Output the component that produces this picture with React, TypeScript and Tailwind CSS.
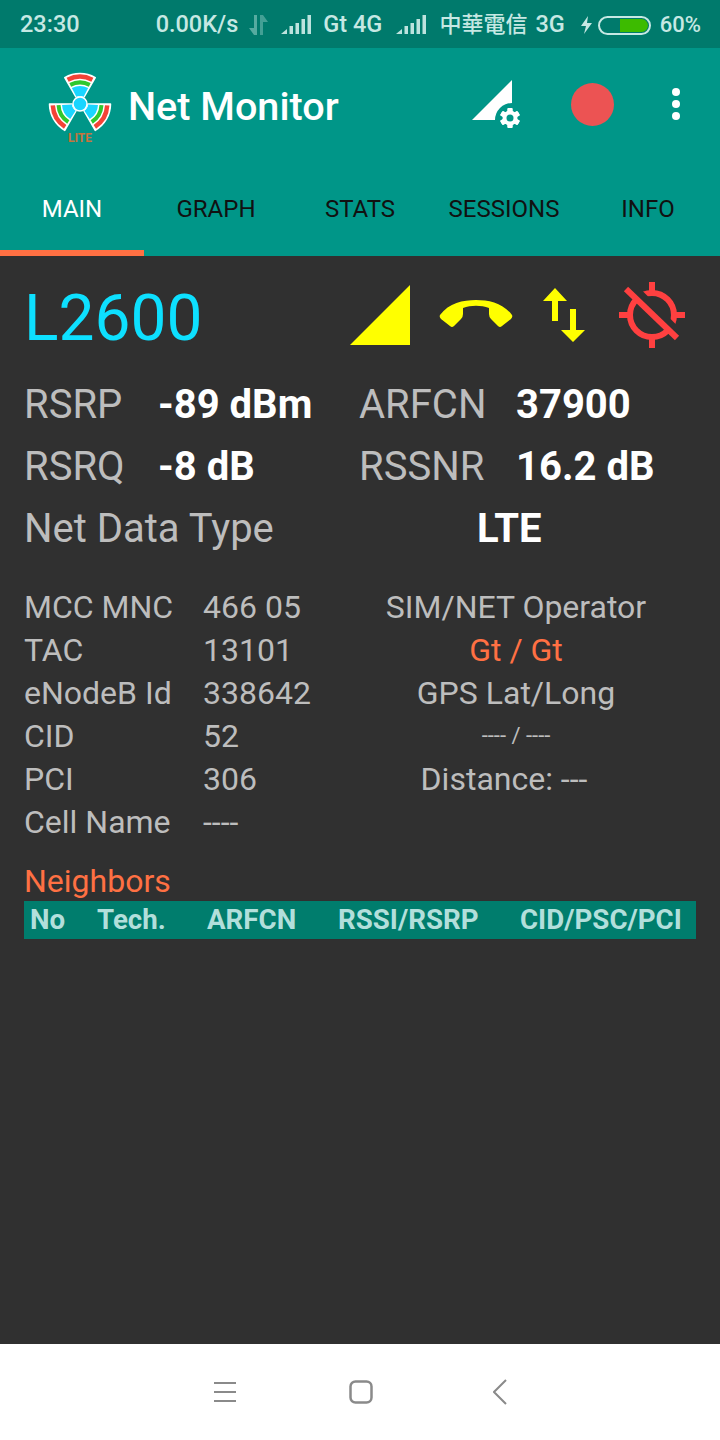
import React from "react";

function sector(r1: number, r2: number, half: number) {
  const p = (r: number, a: number) => {
    const t = ((a - 90) * Math.PI) / 180;
    return `${(r * Math.cos(t)).toFixed(2)} ${(r * Math.sin(t)).toFixed(2)}`;
  };
  return `M${p(r1, -half)} A${r1} ${r1} 0 0 1 ${p(r1, half)} L${p(r2, half)} A${r2} ${r2} 0 0 0 ${p(r2, -half)} Z`;
}

function Logo() {
  return (
    <svg width="70" height="80" viewBox="45 70 70 80" className="shrink-0 mt-[12px]">
      <g transform="translate(80 104)">
        {[0, 120, 240].map((a) => (
          <g key={a} transform={`rotate(${a})`}>
            <path d={sector(30.5, 8, 30)} fill="#fff" stroke="#fff" strokeWidth="1.5" strokeLinejoin="round" />
            <path d={sector(29.5, 25, 27)} fill="#f44336" />
            <path d={sector(23.5, 19.5, 27)} fill="#2ec82e" />
            <path d={sector(18, 8, 27)} fill="#1ad5ff" />
          </g>
        ))}
        <circle r="7" fill="#1ad5ff" stroke="#fff" strokeWidth="1.5" />
      </g>
      <text x="80" y="142" textAnchor="middle" fontSize="12" fontWeight="700" fill="#c8743c" fontFamily="Roboto, sans-serif">LITE</text>
    </svg>
  );
}

function Bars() {
  return (
    <svg width="30" height="20" viewBox="0 0 30 20" className="shrink-0">
      <path d="M0 19 L6 14 V19 Z" fill="#bde3de" />
      <rect x="8.5" y="11" width="3.5" height="8" fill="#bde3de" />
      <rect x="14.5" y="8" width="3.5" height="11" fill="#bde3de" />
      <rect x="20.5" y="4" width="3.5" height="15" fill="#bde3de" />
      <rect x="26.5" y="0" width="3.5" height="19" fill="#bde3de" />
    </svg>
  );
}

function StatusBar() {
  return (
    <div className="h-12 bg-[#007a6c] flex items-center text-[#c6e8e3] text-[23.5px] font-medium leading-none pl-5 pt-[2px] whitespace-nowrap">
      <span>23:30</span>
      <span className="ml-[76px]">0.00K/s</span>
      <svg width="22" height="20" viewBox="0 0 22 20" className="ml-[10px] shrink-0" fill="#5fb0a6">
        <path d="M6 0 h3 v20 h-3 v-7 h-5 l5 7 Z" opacity="0.9" />
        <path d="M12 20 h3 v-13 h5 l-5 -7 h-3 Z" opacity="0.7" />
      </svg>
      <span className="ml-[11px] flex"><Bars /></span>
      <span className="ml-[12px]">Gt 4G</span>
      <span className="ml-[14px] flex"><Bars /></span>
      <span className="ml-[13px] text-[22px]">中華電信</span>
      <span className="ml-[8px]">3G</span>
      <svg width="13" height="18" viewBox="0 0 13 18" className="ml-[15px] shrink-0" fill="#c6e8e3">
        <path d="M8 0 L1 10 H6 L4 18 L12 7 H7 Z" />
      </svg>
      <div className="ml-[5px] relative w-[53px] h-[19px] rounded-full border-2 border-[#c6e8e3] shrink-0">
        <div className="absolute left-[20px] top-[1px] bottom-[1px] right-[1px] bg-[#3dbb00] rounded-r-full" />
      </div>
      <span className="ml-[9px] text-[22px]">60%</span>
    </div>
  );
}

function AppBar() {
  return (
    <div className="bg-[#009688]">
      <div className="h-[112px] flex items-center pl-[45px]">
        <Logo />
        <span className="ml-[13px] text-white text-[39.6px] font-medium leading-none pt-[6px]">Net Monitor</span>
        <div className="ml-auto flex items-center">
          <svg width="48" height="48" viewBox="0 0 48 48" className="mr-[51px] shrink-0">
            <path d="M0 40 L40 0 V23 A17 17 0 0 0 23 40 Z" fill="#fff" />
            <g transform="translate(38 38)" fill="#fff">
              {[0, 60, 120, 180, 240, 300].map((a) => (
                <rect key={a} x="-2.5" y="-10" width="5" height="20" rx="1" transform={`rotate(${a})`} />
              ))}
              <circle r="7.5" />
              <circle r="3.5" fill="#009688" />
            </g>
          </svg>
          <div className="w-[43px] h-[43px] rounded-full bg-[#ec5353] mr-[58px] shrink-0" />
          <div className="flex flex-col gap-[4px] mr-[40px]">
            <span className="w-[8px] h-[8px] rounded-full bg-white block" />
            <span className="w-[8px] h-[8px] rounded-full bg-white block" />
            <span className="w-[8px] h-[8px] rounded-full bg-white block" />
          </div>
        </div>
      </div>
      <div className="grid grid-cols-5 h-[96px] text-[24px] leading-none">
        {["MAIN", "GRAPH", "STATS", "SESSIONS", "INFO"].map((t, i) => (
          <div
            key={t}
            className={
              i === 0
                ? "flex items-center justify-center pt-[8px] text-white border-b-[6px] border-[#ff7043]"
                : "flex items-center justify-center pt-[8px] text-[#111] border-b-[6px] border-transparent"
            }
          >
            {t}
          </div>
        ))}
      </div>
    </div>
  );
}

function Icons() {
  return (
    <div className="flex items-center mb-[6px]">
      <svg width="62" height="62" viewBox="0 0 62 62" className="shrink-0"><path d="M0 60 L60 0 V60 Z" fill="#ffff00" /></svg>
      <svg width="74" height="32" viewBox="0 0 74 32" className="ml-[27px] shrink-0">
        <path d="M1 15 C10 3 24 0 37 0 C50 0 64 3 73 15 Q74 17 72 19 L63 26 Q61 28 59 26 L52 19 Q50 17 50 14 V8 C42 5 32 5 24 8 V14 Q24 17 22 19 L15 26 Q13 28 11 26 L2 19 Q0 17 1 15 Z" fill="#ffff00" />
      </svg>
      <svg width="42" height="56" viewBox="0 0 42 56" className="ml-[30px] shrink-0" fill="#ffff00">
        <path d="M12 0 L24 13 H15 V33 H9 V13 H0 Z" />
        <path d="M27 21 H33 V42 H42 L30 54 L18 42 H27 Z" />
      </svg>
      <svg width="68" height="68" viewBox="0 0 68 68" className="ml-[33px] mt-[-2px] shrink-0" fill="none" stroke="#ff4040" strokeWidth="6">
        <circle cx="34" cy="34" r="22" />
        <path d="M34 1 V12 M34 56 V67 M1 34 H12 M56 34 H67" />
        <path d="M14 5 L63 54" stroke="#303030" strokeWidth="8" />
        <path d="M8 8 L59 57" strokeWidth="6" />
      </svg>
    </div>
  );
}

function Metric({ label, value, w }: { label: string; value: string; w: string }) {
  return (
    <div className="flex items-baseline">
      <span className={`text-[#bdbdbd] ${w}`}>{label}</span>
      <span className="text-white font-bold">{value}</span>
    </div>
  );
}

function Info({ a, b }: { a: string; b: string }) {
  return (
    <div className="flex h-[43px] items-center">
      <span className="w-[179px]">{a}</span>
      <span>{b}</span>
    </div>
  );
}

export default function App() {
  return (
    <div className="w-[720px] h-[1440px] flex flex-col bg-[#303030] overflow-hidden" style={{ fontFamily: "Roboto, 'Noto Sans CJK TC', sans-serif" }}>
      <StatusBar />
      <AppBar />
      <div className="flex-1 px-6 flex flex-col">
        <div className="h-[118px] pt-[8px] flex items-center justify-between pr-[10px]">
          <span className="text-[64px] leading-none text-[#0de0ff]">L2600</span>
          <Icons />
        </div>
        <div className="text-[40px] leading-none">
          <div className="h-[62px] flex items-center">
            <div className="w-[335px]"><Metric label="RSRP" value="-89 dBm" w="w-[134px]" /></div>
            <Metric label="ARFCN" value="37900" w="w-[157px]" />
          </div>
          <div className="h-[62px] flex items-center">
            <div className="w-[335px]"><Metric label="RSRQ" value="-8 dB" w="w-[134px]" /></div>
            <Metric label="RSSNR" value="16.2 dB" w="w-[157px]" />
          </div>
          <div className="h-[62px] flex items-center">
            <span className="text-[#bdbdbd] w-[453px]">Net Data Type</span>
            <span className="text-white font-bold">LTE</span>
          </div>
        </div>
        <div className="flex mt-[25px] text-[32px] leading-none text-[#bdbdbd]">
          <div className="w-[336px]">
            <Info a="MCC MNC" b="466 05" />
            <Info a="TAC" b="13101" />
            <Info a="eNodeB Id" b="338642" />
            <Info a="CID" b="52" />
            <Info a="PCI" b="306" />
            <Info a="Cell Name" b="----" />
          </div>
          <div className="w-[312px] flex flex-col items-center">
            <div className="h-[43px] flex items-center">SIM/NET Operator</div>
            <div className="h-[43px] flex items-center text-[#ff7043]">Gt / Gt</div>
            <div className="h-[43px] flex items-center">GPS Lat/Long</div>
            <div className="h-[43px] flex items-center text-[22px]">---- / ----</div>
            <div className="h-[43px] flex items-center pr-6">Distance: ---</div>
          </div>
        </div>
        <div className="mt-[17px] text-[32px] leading-none text-[#ff7043] h-[41px] flex items-center">Neighbors</div>
        <div className="h-[38px] bg-[#007d6d] text-[#b2dfdb] font-bold text-[27.7px] leading-none flex items-center">
          <span className="ml-[6px] w-[67px]">No</span>
          <span className="w-[110px]">Tech.</span>
          <span className="w-[131px]">ARFCN</span>
          <span className="w-[182px]">RSSI/RSRP</span>
          <span>CID/PSC/PCI</span>
        </div>
      </div>
      <div className="h-24 bg-white flex items-center justify-center shrink-0">
        <svg width="24" height="22" viewBox="0 0 24 22" className="mr-[112px] shrink-0" stroke="#8a8a8a" strokeWidth="2"><path d="M1 2 H23 M1 11 H23 M1 20 H23" /></svg>
        <svg width="24" height="24" viewBox="0 0 24 24" className="mr-[120px] shrink-0" fill="none" stroke="#8a8a8a" strokeWidth="2.5"><rect x="1.5" y="1.5" width="21" height="21" rx="5" /></svg>
        <svg width="14" height="26" viewBox="0 0 14 26" className="shrink-0" fill="none" stroke="#8a8a8a" strokeWidth="2"><path d="M13 1 L1 13 L13 25" /></svg>
      </div>
    </div>
  );
}
